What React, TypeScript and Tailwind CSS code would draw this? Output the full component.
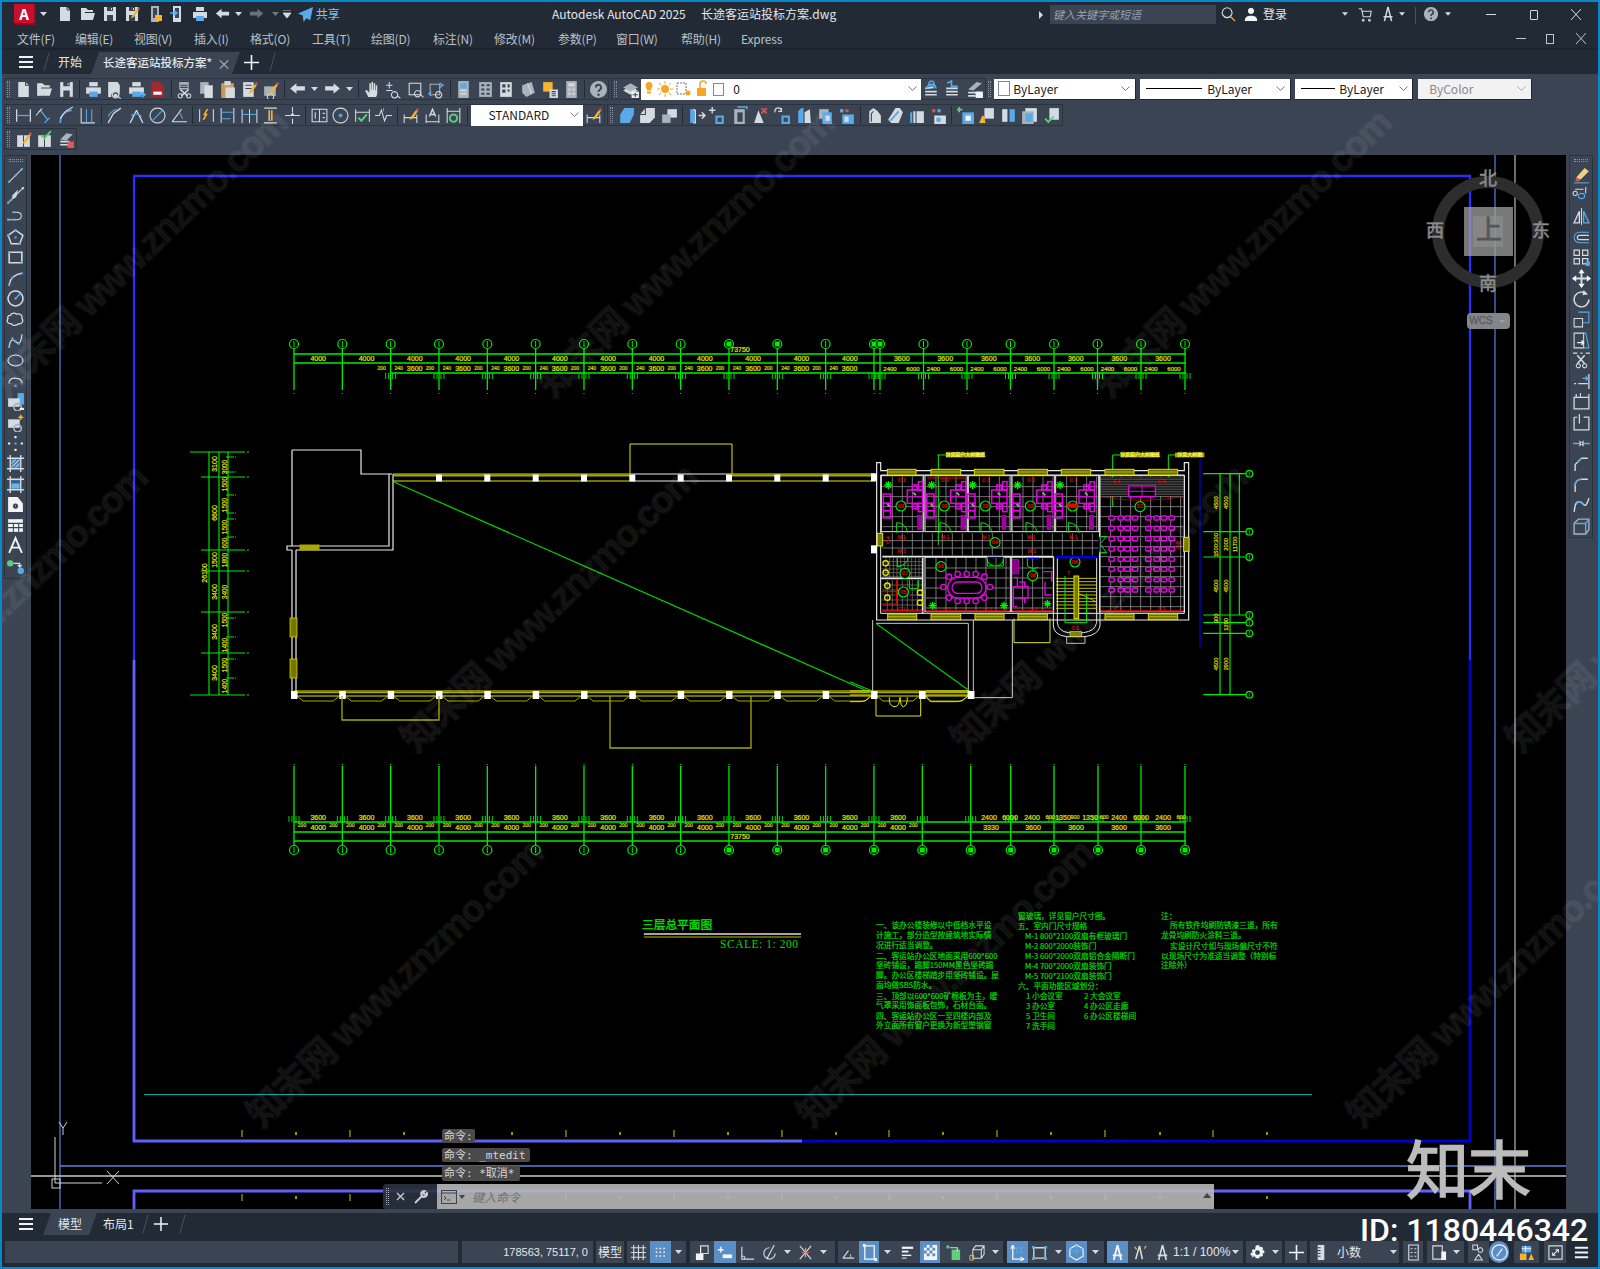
import React from 'react';

type Part = [string, string, number?];
const L = '#d6dbe1', D = '#3b4453', B = '#58abe8', Y = '#f4b42f', G = '#5fd07a', R = '#d9534f', W = '#f1f3f5', M = '#aab2bb';
const dt = (x: number, y: number) => `M${x - 1} ${y - 1}h2v2h-2z`;
const pencil: Part[] = [['M9 11l5-7 2 1-5 7-3 1z', Y, 0], ['M14 4l1-2 2 1-1 2z', R, 0]];
const floppy: Part[] = [['M3 2h12v14H3z', L, 0], ['M6 2h6v4H6zM6 10h6v6H6z', D, 0], ['M10 3h1v2h-1z', L, 0]];
const printer: Part[] = [['M5 2h8v4H5z', L, 0], ['M2 7h14v6H2z', L, 0], ['M5 11h8v5H5z', B, 0]];
const doc: Part[] = [['M4 2h7l3 3v11H4z', L, 0], ['M11 2v3h3', D]];
const mag: Part[] = [['M10 12a3 3 0 1 0 .01 0zM12 15l3 3', D, 2.2], ['M10 11a3 3 0 1 0 .01 0zM12 15l3 3', L]];
const ic: Record<string, Part[]> = {
  new: doc,
  open: [['M2 15V3h5l2 2h5v2H6l-2 8z', L, 0], ['M5 8h11l-2 7H3z', L, 0]],
  save: floppy,
  saveas: [...floppy, ...pencil],
  ph1: [['M5 1h8v16H5z', M, 0], ['M7 3h4v10H7z', D, 0], ['M9 10h7v6H9z', Y, 0]],
  ph2: [['M5 1h8v16H5z', L, 0], ['M7 3h4v10H7z', D, 0], ['M2 8h6M6 5.5L9 8l-3 2.5', B, 1.6]],
  print: printer,
  preview: [['M3 2h9l2 3v11H3z', L, 0], ...mag],
  plot: [...printer, ['M9 14h8M14 11.5l3 2.5-3 2.5', B, 1.6]],
  dwf: [['M3 2h8l4 4v10H3z', '#a5282e', 0], ['M5 11h8v3H5z', W, 0]],
  cut: [['M4 2h9v7H4z', M, 0], ['M5 5h7M5 7h7', D, 1], ['M5 9l7 6M13 9l-7 6', L, 1.4], ['M5 13a2 2 0 1 0 .01 0M13 13a2 2 0 1 0 .01 0', L]],
  copy: [['M3 2h8v11H3z', M, 0], ['M7 5h8v12H7z', L, 0]],
  paste: [['M3 3h12v14H3z', '#c99a58', 0], ['M6 1h6v4H6z', L, 0], ['M7 7h9v10H7z', L, 0]],
  match: [['M3 2h10v14H3z', L, 0], ['M5 5h6M5 8h6', D, 1], ...pencil],
  match2: [['M3 6h11v9H3z', M, 0], ['M9 13a3 3 0 1 0 .01 0', L], ...pencil],
  undo: [['M2 8l6-5v3h8v4H8v3z', L, 0]],
  redo: [['M16 8l-6-5v3H2v4h8v3z', L, 0]],
  hand: [['M5 16l-3-6 1.5-.6L6 12V3h1.5v6h.5V2h1.5v7h.5V3h1.5v7h.5V5h1.5v8l-1 3z', L, 0]],
  zoomrt: [['M5 2v6M2 5h6M2 10h6', L], ['M10 11a3 3 0 1 0 .01 0M12.5 14.5l3 3', L]],
  zoomw: [['M3 3h11v11H3z', L], ['M11 10a3 3 0 1 0 .01 0M13.5 13.5l3 3', L]],
  zoomp: [['M3 4h9v10H3z', M], ['M12 3l3 2-3 2M4 15l-2-2 2-2', B, 1.5], ['M11 11a3 3 0 1 0 .01 0', L]],
  prop: [['M4 1h10v16H4z', M, 0], ['M6 3h6v5H6z', B, 0], ['M6 10h6M6 13h6', L, 1.4]],
  dc: [['M3 2h12v14H3z', M, 0], ['M5 4h3v2H5zM10 4h3v2h-3zM5 8h3v2H5zM10 8h3v2h-3zM5 12h3v2H5zM10 12h3v2h-3z', D, 0]],
  tp: [['M3 2h11v14H3z', L, 0], ['M5 4h3v3H5zM10 4h2v3h-2zM5 9h3v3H5z', D, 0], ['M10 9h2v2h-2z', D, 0]],
  sheet: [['M3 5l9-3 3 10-8 4-4-4z', M, 0], ['M8 3l4 10', L]],
  note: [['M3 2h9v9H3z', Y, 0], ['M9 9h8v8H9z', L, 0], ['M11 11h4M11 13h4M11 15h4', D, 1]],
  calc: [['M4 1h10v16H4z', M, 0], ['M6 3h6v3H6z', L, 0], ['M6 8h2v2H6zM10 8h2v2h-2zM6 12h2v2H6zM10 12h2v2h-2z', L, 0]],
  help: [['M9 1a8 8 0 1 0 .01 0z', M, 0], ['M6.5 7a2.5 2.5 0 1 1 3.5 2.3c-1 .5-1 1-1 2', D, 1.8], ['M8 13h2v2H8z', D, 0]],
  layer: [['M2 10l7-4 7 4-7 4z', L, 0], ['M2 7l7-4 7 4-7 4z', M, 0], ['M10 11h7v6h-7z', W, 0], ['M11 14h5M13.5 12v4', D, 1]],
  l2: [['M3 14h11M3 11h11M3 8l8-1', L, 1.6], ['M9 1a2.5 2.5 0 1 0 .01 0', B, 1.4], ['M5 8a4 4 0 0 1 8 0', B, 2]],
  l3: [['M4 3l4-2v5h6', B, 1.6], ['M3 14l11 0M3 11l11 0M3 8h11', L, 1.6]],
  l4: [['M3 9l8-7 5 1-8 7z', M, 0], ['M3 12h12M3 15h7', L, 1.6], ['M10 11h7v6h-7z', W, 0]],
  dl: [['M2.5 3v12M15.5 3v12', L, 1.2], ['M2.5 9h13', B, 1.2]],
  da: [['M3 6l4-4M9 16l5-5M5 4l7 9', B, 1.2], ['M1 9l5-6', L]],
  dr: [['M3 16c0-7 4-11 11-12', B, 1.5], ['M3 12l5-7 7-4', L, 1]],
  dord: [['M3 2v14h13', L], ['M8 3v13M13 3v13', B]],
  darc: [['M3 16l5-9 7-5', L, 1.2], ['M3 10c2-4 4-6 8-7', B, 1]],
  drad: [['M3 16l6-12M9 4l6 12', L, 1.2], ['M4 9c3-2 7-2 10 1', B, 1]],
  ddia: [['M9 2a7 7 0 1 0 .01 0', L], ['M4 14L14 4', B]],
  dang: [['M2 15h14M2 15l9-12', L], ['M9 6l3 6', B]],
  qd: [['M2.5 3v12M15.5 3v12', L], ['M6 13l3-5-2 0 3-5', Y, 1.5]],
  db: [['M3 2v14M15 2v14', L], ['M3 6h12M3 12h9', B]],
  dc2: [['M2 3v13M9 3v13M16 3v13', L], ['M2 8h14', B]],
  ds: [['M3 2h12M3 16h12', L], ['M7 4h4v10H7z', Y, 0], ['M9 4v10', D]],
  dbk: [['M2 9h14', L], ['M9 1v5M9 12v5', L], ['M7 9l2-3 2 3z', L, 0]],
  tol: [['M2 3h14v12H2z', L], ['M9 3v12', L], ['M5 6v6M12 7h2M12 11h2', L]],
  cen: [['M9 2a7 7 0 1 0 .01 0', L], ['M7 9h4M9 7v4', B, 1.6]],
  ins: [['M2.5 3v12M15.5 3v12M2.5 6h13', L], ['M5 11l3 3 5-6', G, 1.8]],
  jog: [['M1 9h4l2-5 3 10 2-5h5', L], ['M9 2v3', B]],
  ded: [['M3 8v8M15 8v8M3 11h12', L], ...pencil],
  dt2: [['M3 8v8M15 8v8M3 15h12', L], ['M6 10L9 3l3 7M7 8h4', L, 1.3]],
  du: [['M3 2v14M15 2v14M3 5h12', L], ['M9 8a3.5 3.5 0 1 0 .01 0', G, 1.8]],
  solid1: [['M3 8l4-6h9v6l-4 8H3z', B, 0]],
  solid2: [['M7 2h9v9l-5 5H2V8z', L, 0], ['M2 8h5V2', D, 1]],
  solid3: [['M7 3h9v8H7z', L, 0], ['M2 8h8v8H2z', M, 0]],
  ext: [['M3 3h5v13H3z', B, 0], ['M6 3l2 1v12l-2 0', L, 1], ['M11 9h6M14 6l3 3-3 3', L, 1.4]],
  mv: [['M4 1v6M1 4h6', L, 1.3], ['M7 9h8v8H7z', B, 0], ['M9 11h4v4H9z', D, 0]],
  cp: [['M4 3h10v14H4z', M, 0], ['M7 1h9v2', B, 1.5], ['M7 6h5v9H7z', D, 0]],
  col: [['M3 16l4-12 5 12z', L, 0], ['M10 2l5 5M15 2l-5 5', R, 1.8]],
  turn: [['M2 6a3 3 0 0 1 6-2M8 2v3H5', L, 1.2], ['M8 9h8v8H8z', B, 0], ['M10 11h4v4h-4z', D, 0]],
  slice: [['M4 16V5l3-3h2v14z', B, 0], ['M10 16V6l5-3 1 13z', L, 0]],
  imp: [['M3 3h9v9H3z', M, 0], ['M6 6h9v11H6z', B, 0], ['M9 9h4v5H9z', L, 0]],
  red: [['M3 3h3v3H3zM8 3h3v3H8z', R, 0], ['M3 3h3v3H3z', B, 0], ['M5 8h11v9H5z', B, 0], ['M7 10h4v5H7z', L, 0]],
  chop: [['M5 16V5l4-3 4 3 3 4v7z', L, 0], ['M7 15V7l2-2', D, 1]],
  chamf: [['M2 13l7-11h4l3 4-4 10H5z', L, 0], ['M4 14l8-9', B, 1.8]],
  clean: [['M6 16V5h2v11zM9 16V5h7v11z', L, 0], ['M3 6h2v10H3z', B, 0]],
  sep: [['M3 3h3v3H3z', R, 0], ['M8 3h3v3H8z', B, 0], ['M5 9h11v8H5z', L, 0], ['M7 11h4v4H7z', B, 0]],
  sadd: [['M3 1v5M1 3.5h5', G, 1.6], ['M6 6h11v11H6z', B, 0], ['M9 9h5v5H9z', W, 0]],
  sbrush: [['M7 2h9v10H7z', L, 0], ['M2 16l3-7 2 1 1 6z', Y, 0]],
  sw: [['M3 3h5v12H3z', L, 0], ['M10 3h5v12h-5z', B, 0]],
  sbox: [['M5 2h11v13H5z', L, 0], ['M2 5h11v12H2z', M, 0], ['M5 7h7v8H5z', B, 0]],
  scheck: [['M7 2h9v11H7z', L, 0], ['M3 12l3 3 5-5', G, 1.8]],
  t1: [['M3 5h12v11H3z', L, 0], ['M9 5v11', D], ...pencil],
  t2: [['M3 5h12v11H3z', L, 0], ['M9 5v11', D], ['M6 5l3 3 6-7', G, 1.8]],
  t3: [['M3 9l6-6 6 1-6 6z', M, 0], ['M3 11h9M3 14h9', L, 1.6], ['M10 11h6v6h-6z', '#e05a5a', 0]],
  line: [['M3 15L15 3', L], [dt(3, 15) + dt(15, 3) + dt(9, 9), B, 0]],
  xline: [['M2 16L16 2', L], ['M6 10l4-4-1 4-3 2', L, 1.6], [dt(2, 16) + dt(5, 13), B, 0], [dt(16, 2), L, 0]],
  pl: [['M2 12h8c6 0 6-7 0-7H7', L], [dt(2, 12) + dt(8, 12) + dt(7, 5), B, 0]],
  poly: [['M9 2l7 5-3 8H5L2 7z', L, 1.4], [dt(9, 2) + dt(2, 7) + dt(13, 15) + dt(9, 9), B, 0]],
  rect: [['M3 4h12v10H3z', L, 1.5], [dt(3, 4) + dt(15, 14), B, 0]],
  arc: [['M3 15c1-6 5-10 12-11', L, 1.3], [dt(3, 15) + dt(15, 4) + dt(6, 8), B, 0]],
  circ: [['M9 2a7 7 0 1 0 .01 0', L, 1.4], ['M9 9l4-4', B, 1.3], [dt(9, 9) + dt(13, 5), B, 0]],
  cloud: [['M4 5c2-3 5-2 6-1 3-1 6 1 5 4 2 2 0 6-3 5-2 2-6 2-7 0-3 0-5-2-3-5-1-1 0-3 2-3z', L, 1.2]],
  spline: [['M3 15c1-7 3-8 6-5s5 2 6-6', L, 1.2], [dt(3, 15) + dt(15, 4) + dt(9, 10) + dt(6, 7) + dt(12, 12), B, 0]],
  ell: [['M2 9c0-3 3-5 7-5s7 2 7 5-3 5-7 5-7-2-7-5z', L, 1.2], [dt(9, 4) + dt(2, 9) + dt(16, 9) + dt(9, 14), B, 0]],
  ella: [['M3 10c0-3 3-5 7-4 3 0 5 2 5 4', L, 1.2], [dt(3, 10) + dt(15, 10) + dt(9, 13), B, 0]],
  blk: [['M11 1h6v11h-6z', B, 0], ['M2 6h11v8H2z', L, 0], ['M11 11a3.5 3.5 0 1 0 .01 0', M, 1.5], ['M13 15h4v2h-4z', W, 0]],
  mk: [['M2 6h11v8H2z', L, 0], ['M11 11a3.5 3.5 0 1 0 .01 0', M, 1.5], ['M14 1l1 2 2 1-2 1-1 2-1-2-2-1 2-1z', Y, 0]],
  pt: [[dt(9, 3) + dt(3, 9) + dt(15, 9) + dt(9, 15), W, 0], [dt(9, 9), B, 0]],
  hatch: [['M4 1v16M14 1v16M1 4h16M1 14h16', L, 1.3], ['M5 5h8v8H5z', '#4a90d0', 0], ['M5 9l4-4M5 13l8-8M9 13l4-4', W, .7]],
  grad: [['M4 1v16M14 1v16M1 4h16M1 14h16', L, 1.3], ['M5 5h8v8H5z', '#6fb5ea', 0], ['M5 5h8v3H5z', '#34608c', 0]],
  region: [['M2 2h9l5 6v8H2z', W, 0], ['M9 9a1.5 1.5 0 1 0 .01 0', D, 2]],
  tbl: [['M2 3h14v12H2z', W, 0], ['M2 7h14M2 11h14M7 7v8M12 7v8', D, 1]],
  atext: [['M3 16L9 2l6 14M5.5 11h7', W, 1.8]],
  addsel: [['M1 6a3 3 0 1 1 6 0 3 3 0 0 1-6 0z', G, 0], ['M11 13a3 3 0 1 1 6 0 3 3 0 0 1-6 0z', B, 0], ['M7 6h6v3M11 7.5l2 2 2-2', L, 1.2]],
  erase: [['M4 11l8-9 4 3-8 8z', '#f0d080', 0], ['M4 11l4 2-2 2-3-1z', R, 0], ['M2 16h14', B]],
  copyo: [['M3 5a2 2 0 1 0 .01 0M3 3h8', L], ['M9 7a3 2.5 0 1 0 .01 5M9 7a3 2.5 0 1 1 0 5', B], ['M13 1v6', L]],
  mirror: [['M2 15L7 4v11z', L, 1.3], ['M16 15L11 4v11z', B, 1.3], ['M9 1v16', L, 1]],
  offset: [['M16 4H7a5 5 0 0 0 0 10h9', B], ['M16 7H7a2 2 0 0 0 0 4h9', L]],
  array: [['M2 2h5v5H2zM10 2h5v5h-5zM2 10h5v5H2zM10 10h5v5h-5z', L, 1.1], ['M13 13h4v4h-4z', B, 0]],
  move: [['M9 1v16M1 9h16', L, 1.8], ['M9 0l3 4H6zM9 18l3-4H6zM0 9l4-3v6zM18 9l-4-3v6z', W, 0]],
  rotate: [['M14 5a7 7 0 1 0 2 5', L, 1.4], ['M11 1l4 4-5 1z', L, 0]],
  scale: [['M2 8h8v8H2z', L], ['M6 2h10v10h-6', B]],
  stretch: [['M2 2h9v14H2z', L], ['M11 2h2l3 14h-5', B], ['M5 11h6M9 9l2 2-2 2', W, 1.3]],
  trim: [['M1 2h4M8 2h2M13 2h4', L, 1.2], ['M5 4l7 8M12 4l-7 8', L, 1.4], ['M12 12a2 2 0 1 0 .01 0M6 12a2 2 0 1 0 .01 0', L]],
  extend: [['M2 11h2M6 11h9', L, 1.2], ['M16 2v14', L, 1.2], ['M10 6h5M13 4l2 2-2 2', B, 1.2]],
  brkpt: [['M2 5h2v-3M16 5V2M2 5h14v11H2z', L, 1.2], ['M8 1v4', L]],
  brk: [['M2 4v12h14V4h-5', L, 1.2], ['M7 1v9', L, 1.2], ['M2 4h3', L]],
  join: [['M1 9h6M11 9h6', B, 1.5], ['M7 6v6l3-3zM11 6v6l-3-3z', L, 0]],
  chamfer: [['M3 16v-6l6-6h6', L, 1.3], ['M5 8l4-4', B, 1.3]],
  fillet: [['M3 16V10c0-4 3-6 6-6h6', L, 1.3], ['M3 10c0-4 3-6 6-6', B, 1.3]],
  blend: [['M2 16l1-6c2-6 6-3 8-1s3 0 5-6', L, 1.3], ['M4 9c2-5 6-2 7 0', B, 1.3]],
  explode: [['M6 3h10v10l-3 4H2V7z', M, 1.3], ['M3 7h10v10M13 7l3-4', B, 1.4]],
  grid: [['M1 4h16M1 9h16M1 14h16M4 1v16M9 1v16M14 1v16', L, 1.2]],
  snap: [['M4 4h1.6v1.6H4zM8 4h1.6v1.6H8zM12 4h1.6v1.6H12zM4 8h1.6v1.6H4zM8 8h1.6v1.6H8zM12 8h1.6v1.6H12zM4 12h1.6v1.6H4zM8 12h1.6v1.6H8zM12 12h1.6v1.6H12z', W, 0]],
  infer: [['M2 10h8v7H2z', W, 0], ['M7 2h8v8H7z', L, 1.2], ['M7 10V4', W]],
  dyn: [['M1 6h6M4 3v6', W, 1.6], ['M6 11h10v4H6z', W, 0]],
  ortho: [['M3 3v13h13', L, 1.2], ['M6 16v-3h-3', L, 1]],
  polar: [['M9 4a6 6 0 1 0 6 6M14 1l-8 15', L, 1.2]],
  iso: [['M3 2l12 14M15 2L3 16', L, 1.2], ['M5 9h8', R, 1.4], ['M9 4v10', G, 1.4]],
  otr: [['M3 15l6-8M3 15h12', L, 1.2], ['M11 11a3 3 0 0 1-1 4', L]],
  osnap: [['M4 2h10v14H4z', W, 1.4], ['M2 0h3v3H2z', W, 0], ['M14 15h3v3h-3z', W, 0]],
  lw: [['M3 4h12', W, 2.4], ['M3 8h7', W, 2], ['M3 12h10', W, 1.5], ['M3 15h5', W, 1]],
  tr: [['M2 1h14v16H2z', W, 0], ['M2 1h3v3H2zM8 1h3v3H8zM5 4h3v3H5zM11 4h3v3h-3zM2 7h3v3H2zM8 7h3v3H8zM5 10h3v3H5zM11 10h3v3h-3z', '#5b8ec4', 0]],
  cyc: [['M3 1v4M1 3h4', G, 1.4], ['M7 6h9v11H7z', G, 0], ['M5 4h8v4', L, 1.2]],
  d3: [['M4 6l3-4h9v9l-3 4H4zM4 6h9v9M13 6l3-4', L, 1.1], ['M1 12h4v5H1z', Y, 1]],
  wst: [['M4 1v15h12', W, 1.4], ['M4 1l-2 4M4 1l2 4M16 16l-4-2M16 16l-4 2', W, 1.2], ['M8 4h5v5H8z', B, 1]],
  sel: [['M3 4h12v11H3z', L, 1.4], ['M1 2h3v3H1zM14 2h3v3h-3zM1 14h3v3H1zM14 14h3v3h-3z', B, 0]],
  gizmo: [['M9 1l7 4v8l-7 4-7-4V5z', W, 1.2], ['M9 9V1M9 9l7-4M9 9l-7-4', B, 1.1]],
  ann: [['M9 1L5 17M9 1l4 16M4 12h10', W, 2]],
  ann2: [['M9 2L5 16M9 2l3 14', L, 1.7], ['M4 3l2 3M14 5l2-3', Y, 1.3]],
  ann3: [['M9 1L5 17M9 1l4 16M4 12h10', L, 1.7]],
  gear: [['M9 1l2 .5.5 2 2-.6 1.5 1.6-.8 2 2 .5v2.5l-2 .5.8 2-1.5 1.6-2-.6-.5 2H7l-.5-2-2 .6L3 14.5l.8-2-2-.5V9.5l2-.5-.8-2L4.500 5.500l2 .6L7 2z', W, 0], ['M9 6.500a2.500 2.500 0 1 0 .01 0', D, 0]],
  plus: [['M9 1v16M1 9h16', W, 1.7]],
  ruler: [['M5 1h7v16H5z', L, 0], ['M5 4h3M5 7h3M5 10h3M5 13h3', D, 1.1]],
  qp: [['M4 1h10v16H4z', L, 1.2], ['M6 5h2M6 9h2M6 13h2M10 5h2M10 9h2M10 13h2', L, 1.1]],
  loc: [['M3 2h10v14H3z', L, 1.2], ['M8 10l3 3M12 8h5v9h-5z', W, 0]],
  nodes: [['M3 1h5v5H3zM11 4a2.500 2.500 0 1 0 .01 0M9 11l4 6H5z', L, 1.1]],
  perf: [['M9 1a8 8 0 1 0 .01 0', W, 1.3], ['M6 13l6-8', W, 1.3]],
  clean2: [['M4 2h10v7H4z', B, 0], ['M8 2v7M4 5h10', W, 1], ['M2 10h7v7H2z', Y, 0], ['M11 17l3-7 3 7z', Y, 0]],
  fs: [['M2 2h14v14H2z', L, 1.2], ['M6 12l6-6M9 6h3v3M6 9v3h3', W, 1.1]],
  ham: [['M2 4h14M2 9h14M2 14h14', W, 2]],
  share: [['M17 1L1 8l5 2 1 7 3-4 4 2z', B, 0]],
  cart: [['M2 3h3l2 9h8l1-6H6', L, 1.2], ['M7 15a1 1 0 1 0 .01 0M14 15a1 1 0 1 0 .01 0', L, 1.2]],
  user: [['M9 2a3.500 3.500 0 1 0 .01 0z', W, 0], ['M2 17c0-5 3-6 7-6s7 1 7 6z', W, 0]],
  search: [['M8 2a5.500 5.500 0 1 0 .01 0', L, 1.3], ['M12 12l5 5', Y, 1.5]],
};

function Ic({ n, s = 18 }: { n: string; s?: number }) {
  const parts = ic[n] || [];
  return (
    <svg width={s} height={s} viewBox="0 0 18 18" className="block shrink-0">
      {parts.map((p, i) =>
        p[2] === 0 ? <path key={i} d={p[0]} fill={p[1]} /> : <path key={i} d={p[0]} fill="none" stroke={p[1]} strokeWidth={p[2] ?? 1} />
      )}
    </svg>
  );
}
function Caret({ c = '#d6dbe1', w = 13 }: { c?: string; w?: number }) {
  return (
    <div className="flex shrink-0 items-center justify-center" style={{ width: w }}>
      <svg width="7" height="4" viewBox="0 0 7 4"><path d="M0 0h7L3.500 4z" fill={c} /></svg>
    </div>
  );
}
function Chev({ c = '#777' }: { c?: string }) {
  return <svg width="9" height="6" viewBox="0 0 9 6" className="shrink-0"><path d="M.5.5l4 4 4-4" fill="none" stroke={c} /></svg>;
}
function Grip() {
  return <div className="h-[16px] w-[3px] ml-[2px] mr-[2.25px] border-x border-dotted border-[#8a93a0] shrink-0" />;
}
function Tool({ items }: { items: string[] }) {
  return (
    <>
      {items.map((it, i) =>
        it === '|' ? (
          <div key={i} className="flex w-[5.5px] h-full shrink-0 justify-center items-center"><div className="w-px h-[18px] bg-[#222a35]" /></div>
        ) : it === '^' ? (
          <Caret key={i} />
        ) : (
          <div key={i} className="flex w-[21.5px] shrink-0 justify-center"><Ic n={it} s={19} /></div>
        )
      )}
    </>
  );
}
function Panel({ children, cls }: { children: React.ReactNode; cls: string }) {
  return <div className={`flex h-[22px] items-center border border-[#2a323e] shrink-0 ${cls}`}>{children}</div>;
}

function Select({ w, bg = 'bg-white', children }: { w: string; bg?: string; children: React.ReactNode }) {
  return <div className={`flex h-[21px] items-center shrink-0 border-b border-r border-[#1f2630] ${bg} ${w}`}>{children}</div>;
}

/* ------------- drawing ------------- */
const GR = '#00dc00', GB = '#00ee00', YE = '#e4e400', WH = '#e9e9e9', MA = '#e800e8', RE = '#f00000', YD = '#a8a800';
const topX = [...Array.from({ length: 13 }, (_, i) => 294 + 48.33 * i), 880, 923.5, 967, 1010.5, 1054, 1097.5, 1141, 1185];
const botX = [...Array.from({ length: 14 }, (_, i) => 294 + 48.33 * i), 970.7, 1010.7, 1054, 1098, 1141, 1185];
const botUp: [number, string][] = [[989, '2400'], [1010, '6000'], [1032, '2400'], [1050, '600'], [1063, '1350'], [1075, '900'], [1090, '1350'], [1104, '600'], [1119, '2400'], [1141, '6000'], [1163, '2400'], [1181, '600']];
const botLo: [number, string][] = [[991, '3330'], [1033, '3600'], [1076, '3600'], [1119, '3600'], [1163, '3600']];

function Tx({ x, y, s, c = YE, fs = 7, rot, a = 'middle', ff }: { x: number; y: number; s: string; c?: string; fs?: number; rot?: number; a?: 'middle' | 'start' | 'end'; ff?: string }) {
  return (
    <text x={x} y={y} fill={c} stroke={c} strokeWidth={fs * 0.03} fontSize={fs} textAnchor={a} dominantBaseline="middle" fontFamily={ff} transform={rot ? `rotate(${rot} ${x} ${y})` : undefined}>
      {s}
    </text>
  );
}
function Ticks({ x, y }: { x: number; y: number }) {
  return <path d={`M${x - 5} ${y}v6M${x - 2} ${y}v6M${x + 2} ${y}v6M${x + 5} ${y}v6`} stroke={GR} strokeWidth="1" fill="none" />;
}
function Bubble({ x, y, fill }: { x: number; y: number; fill?: boolean }) {
  return (
    <g>
      <circle cx={x} cy={y} r="4.500" fill="#000" stroke={GB} strokeWidth="1.200" />
      {fill ? <rect x={x - 2.5} y={y - 2.5} width="5" height="5" fill={GB} /> : <path d={`M${x} ${y - 3}v6`} stroke={GB} strokeWidth="1" />}
    </g>
  );
}
function TopDims() {
  const filled = [9, 10, 12, 13];
  return (
    <g>
      <path d="M294 354H1186M294 363H1186M390 373H1186" stroke={GB} strokeWidth="1.300" />
      {topX.map((x, i) => (
        <g key={i}>
          <path d={`M${x} 349V390`} stroke={GB} strokeWidth="1.300" />
          <rect x={x - .5} y="393" width="1" height="1" fill={GB} />
          <Bubble x={x} y={344} fill={filled.includes(i)} />
          {i >= 2 && <Ticks x={x} y={373} />}
          {i < topX.length - 1 && i !== 12 && <Tx x={(x + topX[i + 1]) / 2} y={359} s={i >= 13 ? '3600' : '4000'} />}
          {i >= 2 && i < 12 && (
            <g>
              <Tx x={x - 9} y={369} s="200" fs={5} />
              <Tx x={x + 8} y={369} s="240" fs={5} />
              <Tx x={x + 24} y={369} s="3600" fs={7} />
            </g>
          )}
          {i >= 13 && i < topX.length - 1 && (
            <g>
              <Tx x={x + 10} y={369} s="2400" fs={6} />
              <Tx x={x + 33} y={369} s="6000" fs={6} />
            </g>
          )}
        </g>
      ))}
      <Tx x={740} y={350} s="73750" fs={7} />
    </g>
  );
}
function BotDims() {
  return (
    <g>
      <path d="M294 822H1186M294 832H1186M294 841H1186" stroke={GB} strokeWidth="1.300" />
      {botX.map((x, i) => (
        <g key={i}>
          <path d={`M${x} 766V845`} stroke={GB} strokeWidth="1.300" />
          <rect x={x - .5} y="764" width="1" height="1" fill={GB} />
          <Bubble x={x} y={850} fill={i >= 9} />
          <Ticks x={x} y={816} />
          {i < 13 && (
            <g>
              <Tx x={(x + botX[i + 1]) / 2} y={818} s="3600" />
              <Tx x={(x + botX[i + 1]) / 2} y={828} s="4000" />
              <Tx x={x + 8} y={826} s="200" fs={5} />
              <Tx x={botX[i + 1] - 9} y={826} s="200" fs={5} />
            </g>
          )}
        </g>
      ))}
      {botUp.map((t, i) => <Tx key={i} x={t[0]} y={818} s={t[1]} fs={t[1].length === 3 ? 5.500 : 7} />)}
      {botLo.map((t, i) => <Tx key={i} x={t[0]} y={828} s={t[1]} />)}
      <Tx x={740} y={837} s="73750" fs={7} />
    </g>
  );
}
function LeftDims() {
  const ys = [452, 477, 550, 571, 612, 653, 695];
  const lab1: [number, number, string][] = [[215, 464, '3100'], [215, 513, '6600'], [215, 560, '1500'], [215, 592, '3400'], [215, 632, '3400'], [215, 673, '3400']];
  const lab2: [number, number, string][] = [[225, 467, '3000'], [225, 484, '1500'], [225, 505, '1500'], [225, 527, '1500'], [225, 543, '600'], [225, 560, '1800'], [225, 592, '3400'], [225, 620, '1500'], [225, 645, '1400'], [225, 665, '1500'], [225, 686, '1400']];
  return (
    <g>
      <path d="M209 452V695M219 452V695M228 452V695" stroke={GR} strokeWidth="1.200" fill="none" />
      {ys.map((y, i) => <path key={i} d={`M${i === 0 || i === 6 ? 190 : 201} ${y}H245M247 ${y}h2`} stroke={GB} strokeWidth="1.200" />)}
      {[457, 472, 495, 513, 519, 537, 618, 637, 659, 678].map(y => <path key={y} d={`M226 ${y}h8M235 ${y}h1`} stroke={GB} strokeWidth="1" />)}
      {lab1.map((l, i) => <Tx key={i} x={l[0]} y={l[1]} s={l[2]} rot={-90} />)}
      {lab2.map((l, i) => <Tx key={i} x={l[0]} y={l[1]} s={l[2]} rot={-90} fs={6.500} />)}
      <Tx x={205} y={573} s="26100" rot={-90} />
    </g>
  );
}
function Plan() {
  const cols = [439, 487.3, 535.7, 584, 632.3, 680.7, 729, 777.3, 825.7];
  const south = [294, 342.3, 390.7, 439, 487.3, 535.7, 584, 632.3, 680.7, 729, 777.3, 825.7, 874, 922, 971];
  return (
    <g fill="none">
      <path d="M292 450H361V474H392M389 474V546H287V550H292M296 550H393V474" stroke={WH} strokeWidth="1.200" />
      <path d="M292 450V546M292 550V691M296 550V691" stroke={WH} strokeWidth="1.200" />
      <rect x="300" y="545" width="19" height="5" fill={YD} stroke={YD} />
      <rect x="290" y="618" width="7" height="19" fill="#777700" stroke={YE} strokeWidth=".7" />
      <rect x="290" y="659" width="7" height="19" fill="#777700" stroke={YE} strokeWidth=".7" />
      <path d="M393 474H632M393 481H632M729 474H875M729 481H875" stroke={YE} strokeWidth="1" />
      <path d="M393 475.500H632M729 475.500H875" stroke={YD} strokeWidth="2" />
      <path d="M632 474H729M632 481H729" stroke={WH} strokeWidth="1" />
      <path d="M630 474V444H732V474" stroke={YE} strokeWidth="1" />
      {cols.map(x => <rect key={x} x={x - 3} y="474.500" width="6" height="7" fill="#fff" />)}
      <path d="M294 691H970M294 696H970" stroke={YE} strokeWidth="1" />
      <path d="M294 692.500H970" stroke={YD} strokeWidth="1.500" />
      {south.slice(0, 14).map((x, i) => <path key={x} d={`M${x + 3} 696l6 5H${south[i + 1] - 9}l6-5`} stroke={YD} strokeWidth="1" />)}
      {south.map(x => <rect key={x} x={x - 3} y="691" width="6.500" height="8" fill="#fff" />)}
      <path d="M342 696V720H439V696M610 696V748H751V696" stroke={YD} strokeWidth="1.300" />
      <path d="M394 482L874 694" stroke="#00cc00" strokeWidth="1.300" />
    </g>
  );
}
function gridD(x0: number, y0: number, x1: number, y1: number, sx: number, sy: number) {
  let d = '';
  for (let x = x0 + sx; x < x1; x += sx) d += `M${x} ${y0}V${y1}`;
  for (let y = y0 + sy; y < y1; y += sy) d += `M${x0} ${y}H${x1}`;
  return d;
}
function Bb({ x, y, s }: { x: number; y: number; s: string }) {
  return (
    <g>
      <circle cx={x} cy={y} r="15" fill="#000" stroke={GB} strokeWidth="3.500" />
      <Tx x={x} y={y + 1} s={s} c={RE} fs={17} />
    </g>
  );
}
function Plant({ x, y }: { x: number; y: number }) {
  return <path d={`M${x - 12} ${y}H${x + 12}M${x} ${y - 12}V${y + 12}M${x - 8} ${y - 8}L${x + 8} ${y + 8}M${x + 8} ${y - 8}L${x - 8} ${y + 8}`} stroke={GB} strokeWidth="4" />;
}
function Door({ x, y, f }: { x: number; y: number; f?: boolean }) {
  return <path d={f ? `M${x} ${y}V${y + 30}A33 33 0 0 0 ${x + 33} ${y}` : `M${x} ${y}V${y - 30}A33 33 0 0 1 ${x + 33} ${y}`} stroke={GB} strokeWidth="3" fill="none" />;
}
function Office({ ox, n }: { ox: number; n: string }) {
  const r: [number, number, number, number][] = [[100, 162, 22, 28], [100, 190, 22, 22], [100, 212, 22, 22], [172, 150, 46, 40], [205, 125, 13, 25], [205, 190, 13, 25], [187, 135, 14, 14], [187, 192, 14, 14]];
  return (
    <g transform={`translate(${ox} 0)`}>
      {r.map((a, i) => <rect key={i} x={a[0]} y={a[1]} width={a[2]} height={a[3]} stroke={MA} strokeWidth="4.500" fill="none" />)}
      <path d="M172 170H218" stroke={MA} strokeWidth="3" />
      <path d="M190 158l8 8M112 192l8 8" stroke="#999" strokeWidth="6" />
      <rect x="203" y="226" width="12" height="42" fill="#a000a0" stroke="#c000c0" strokeWidth="2" />
      <Plant x={115} y={135} />
      <Tx x={155} y={123} s="C-1" c={RE} fs={15} />
      <Bb x={153} y={198} s={n} />
      <Door x={140} y={278} />
      <Tx x={155} y={292} s="M-1" c={RE} fs={14} />
    </g>
  );
}
function Detail() {
  const winT = [[112, 198], [243, 332], [373, 462], [504, 592], [634, 722], [765, 852], [895, 983]];
  const winB = [[113, 200], [243, 332], [375, 462], [504, 592], [765, 852], [895, 983]];
  const seatX = [785, 812, 832, 855, 895, 920, 942, 965];
  const seatY = [234, 265, 296, 327, 358, 388, 419, 450];
  const rooms: [number, number, number, number][] = [[97, 110, 218, 272], [228, 110, 349, 272], [358, 110, 480, 272], [489, 110, 611, 272], [620, 110, 743, 272], [752, 110, 1000, 512], [228, 354, 478, 512], [488, 354, 608, 512]];
  const chairs = [[297, 410], [323, 402], [350, 402], [377, 402], [403, 410], [280, 441], [420, 441], [297, 473], [323, 483], [350, 483], [377, 483], [403, 473]];
  const steps = Array.from({ length: 10 }, (_, i) => 415 + i * 10);
  return (
    <g transform="translate(850 440) scale(.33333)" fill="none">
      <path d="M262 45H288M265 45V315" stroke={GB} strokeWidth="3" />
      <path d="M812 45H788V200M975 45H955V150" stroke={GB} strokeWidth="3" />
      <rect x="288" y="38" width="116" height="14" fill={YD} />
      <rect x="812" y="38" width="116" height="14" fill={YD} />
      <rect x="975" y="38" width="88" height="14" fill={YD} />
      <Tx x={346} y={45} s="详见窗户大样图纸" c="#ffff60" fs={15} />
      <Tx x={870} y={45} s="详见窗户大样图纸" c="#ffff60" fs={15} />
      <Tx x={1019} y={45} s="详见大样图" c="#ffff60" fs={15} />
      {/* ceiling grids */}
      {rooms.map((r, i) => <path key={i} d={gridD(r[0], r[1], r[2], r[3], 30, 30)} stroke="#8a8a8a" strokeWidth="2.500" />)}
      <path d={gridD(97, 280, 745, 346, 30, 22)} stroke="#8a8a8a" strokeWidth="2.500" />
      <path d={gridD(97, 354, 218, 415, 11, 11)} stroke="#808080" strokeWidth="2" />
      <path d={gridD(97, 420, 218, 512, 15, 15)} stroke="#808080" strokeWidth="2" />
      {/* hatch */}
      <rect x="752" y="112" width="248" height="56" fill="#000" />
      <path d={Array.from({ length: 11 }, (_, i) => `M752 ${114 + i * 5}H1000`).join('')} stroke="#777" strokeWidth="2" />
      <path d="M752 170Q870 192 1000 170" stroke={RE} strokeWidth="2" />
      {/* walls */}
      <path d="M80 68V540H1016V68H1003V92H92V68Z" stroke={WH} strokeWidth="3.500" />
      <path d="M92 105H1003V520H92Z" stroke={WH} strokeWidth="3" />
      {rooms.map((r, i) => <rect key={i} x={r[0] - 3} y={r[1] - 3} width={r[2] - r[0] + 6} height={r[3] - r[1] + 6} stroke={WH} strokeWidth="3" />)}
      <path d="M97 350H610M92 415H218M218 354V520" stroke={WH} strokeWidth="5" />
      <path d="M610 354V558Q612 585 650 590H705Q745 585 750 558V110M622 354V548Q625 574 655 578H700Q735 574 740 548V354" stroke={WH} strokeWidth="3" />
      <path d="M650 590V610H705V590" stroke="#bbb" strokeWidth="3" />
      {/* windows */}
      {winT.map((w, i) => <g key={i}><rect x={w[0]} y="88" width={w[1] - w[0]} height="17" fill="#666600" stroke={YE} strokeWidth="3" /><path d={`M${w[0]} 96H${w[1]}`} stroke={YD} strokeWidth="4" /></g>)}
      {winB.map((w, i) => <g key={i}><rect x={w[0]} y="522" width={w[1] - w[0]} height="17" fill="#666600" stroke={YE} strokeWidth="3" /><path d={`M${w[0]} 530H${w[1]}`} stroke={YD} strokeWidth="4" /></g>)}
      <rect x="82" y="280" width="16" height="38" fill="#777700" stroke={YE} strokeWidth="3" />
      <rect x="1001" y="292" width="16" height="42" fill="#777700" stroke={YE} strokeWidth="3" />
      <rect x="660" y="575" width="35" height="14" fill="#777700" stroke={YE} strokeWidth="2" />
      {/* red */}
      <path d="M97 513H218M228 513H478M488 513H610M752 513H1000" stroke={RE} strokeWidth="4" />
      <path d="M232 114H345M97 455H140V492H97M140 420V455" stroke={RE} strokeWidth="3" />
      {[[155, 508], [290, 508], [415, 508], [550, 508], [805, 508], [935, 508], [800, 124], [935, 124], [675, 566]].map((p, i) => <Tx key={i} x={p[0]} y={p[1]} s="C-1" c={RE} fs={14} />)}
      <Tx x={115} y={300} s="C-4" c={RE} fs={14} rot={-90} />
      <Tx x={985} y={315} s="C-5" c={RE} fs={14} rot={-90} />
      <Tx x={155} y={335} s="M-3" c={RE} fs={14} />
      <Tx x={545} y={335} s="M-3" c={RE} fs={14} />
      <Tx x={656} y={400} s="T" c={RE} fs={14} />
      {/* offices */}
      <Office ox={0} n="03" />
      <Office ox={130} n="03" />
      <Office ox={253} n="03" />
      <Office ox={388} n="03" />
      <Office ox={515} n="03" />
      <rect x="652" y="190" width="32" height="12" fill={RE} />
      {/* hall */}
      {seatY.map(y => seatX.map(x => <rect key={`${x}-${y}`} x={x - 8} y={y - 6} width="16" height="12" rx="3" stroke={MA} strokeWidth="4.500" fill="#000" />))}
      <rect x="836" y="138" width="80" height="32" stroke={MA} strokeWidth="4" fill="#000" />
      <path d="M876 138V170M836 154H916" stroke={MA} strokeWidth="3" />
      <Bb x={870} y={200} s="02" />
      {/* meeting */}
      <rect x="293" y="412" width="115" height="62" rx="31" stroke={MA} strokeWidth="4" fill="#000" />
      <rect x="306" y="426" width="90" height="34" rx="17" stroke={MA} strokeWidth="4" />
      {chairs.map((c, i) => <circle key={i} cx={c[0]} cy={c[1]} r="8" stroke={MA} strokeWidth="4" fill="#000" />)}
      <Plant x={248} y={497} />
      <Plant x={462} y={497} />
      <Plant x={592} y={491} />
      <Bb x={273} y={380} s="01" />
      {/* right small office */}
      <rect x="488" y="358" width="18" height="44" fill="#800080" stroke="#c000c0" strokeWidth="2" />
      <rect x="490" y="440" width="44" height="34" stroke={MA} strokeWidth="4" />
      <path d="M490 412h12v28M490 474v26h12M508 426h16v14M508 474h16v16M580 395h25v30M585 425v40h20" stroke={MA} strokeWidth="4" />
      <Bb x={548} y={407} s="08" />
      <Bb x={675} y={366} s="06" />
      <Bb x={435} y={308} s="04" />
      {/* wc */}
      {[[107, 370], [107, 398], [112, 437], [112, 473], [210, 458], [210, 488]].map((c, i) => <circle key={i} cx={c[0]} cy={c[1]} r="8" stroke={YE} strokeWidth="4" />)}
      <Bb x={165} y={400} s="07" />
      <Bb x={160} y={456} s="05" />
      {/* doors and blue */}
      <Door x={142} y={350} f />
      <path d="M178 420V445H205V420" stroke={GB} strokeWidth="3" />
      <path d="M412 352V378H460V352M430 376a18 18 0 0 1-18-18M442 376a18 18 0 0 0 18-18" stroke={GB} strokeWidth="3" />
      <path d="M532 352V378A33 33 0 0 0 565 382" stroke={GB} strokeWidth="3" />
      <path d="M748 290H770L750 312L770 338H748" stroke={GB} strokeWidth="3" />
      <path d="M412 352H460M532 355H565M618 350H740M618 354H740M749 292V335M1050 55V620" stroke="#0000e0" strokeWidth="3.500" />
      {/* stairs */}
      {steps.map(y => <path key={y} d={`M618 ${y}H672M686 ${y}H740`} stroke={YE} strokeWidth="2.500" />)}
      <rect x="672" y="408" width="14" height="128" fill="#777700" stroke={YE} strokeWidth="3" />
      <path d="M645 408V548H710V460" stroke={GB} strokeWidth="3" />
      <path d="M686 460L738 485" stroke={YE} strokeWidth="2" />
      {/* lower wing */}
      <path d="M68 540V770M78 550H355V770M370 540V770M375 773H487V540" stroke="#ccc" strokeWidth="3" />
      <path d="M80 552L355 750M0 725L65 752" stroke="#00cc00" strokeWidth="3.500" />
      <path d="M492 535V608H600V535M78 770V828H212V770M118 772V785Q122 800 135 800Q148 800 150 772M150 772Q152 800 160 800Q172 798 172 772" stroke={YE} strokeWidth="3" />
      <path d="M228 753H355M228 765H355Q340 785 320 785H245Q235 785 228 765M0 753H65M0 765H65Q50 785 30 785H0" stroke={YE} strokeWidth="3" />
      {[[72, 112], [72, 328], [72, 765], [217, 765], [362, 765]].map((c, i) => <rect key={i} x={c[0] - 9} y={c[1] - 12} width="18" height="24" fill="#fff" />)}
      {/* right dims */}
      {[101, 275, 351, 525, 548, 580, 764].map(v => <g key={v}><path d={`M1060 ${v}H1188`} stroke={GB} strokeWidth="3.500" /><circle cx="1198" cy={v} r="10" stroke={GB} strokeWidth="3.500" fill="#000" /><path d={`M1198 ${v - 7}v14`} stroke={GB} strokeWidth="2" /></g>)}
      <path d="M1110 101V764M1140 101V764M1168 101V525" stroke={GB} strokeWidth="3.500" />
      {[[1100, 188, '4500'], [1130, 188, '4500'], [1100, 315, '1500:300'], [1130, 313, '2000'], [1158, 313, '11700'], [1100, 438, '4500'], [1130, 438, '4500'], [1100, 535, '300'], [1130, 553, '1200'], [1100, 672, '4500'], [1130, 672, '2900']].map((t, i) => <Tx key={i} x={t[0] as number} y={t[1] as number} s={t[2] as string} fs={17} rot={-90} />)}
    </g>
  );
}
function Notes() {
  const n1 = ['一、该办公楼装修以中低档水平设', '计施工，部分造型按建筑地实际情', '况进行适当调整。', '二、客运站办公区地面采用600*600', '坚砖铺设，踢脚150MM黑色坚砖踢', '脚。办公区楼梯踏步用坚砖铺设。屋', '面均做SBS防水。', '三、顶部以600*600矿棉板为主，暖', '气罩采用饰面板包饰，石材台面。', '四、客运站办公区一至四楼内部及', '外立面所有窗户更换为新型塑钢窗'];
  const y1 = [926, 936, 946, 957, 966, 976, 986, 997, 1006, 1017, 1026];
  const n2: [number, number, string][] = [[1018, 917, '窗玻璃，详见窗户尺寸图。'], [1018, 927, '五、室内门尺寸规格'], [1025, 937, 'M-1 800*2100双扇有框玻璃门'], [1025, 947, 'M-2 800*2000装饰门'], [1025, 957, 'M-3 600*2000双扇铝合金隔断门'], [1025, 967, 'M-4 700*2000双扇装饰门'], [1025, 977, 'M-5 700*2100双扇装饰门'], [1018, 987, '六、平面功能区域划分：'], [1026, 997, '1 小会议室'], [1084, 997, '2 大会议室'], [1026, 1007, '3 办公室'], [1084, 1007, '4 办公区走廊'], [1026, 1017, '5 卫生间'], [1084, 1017, '6 办公区楼梯间'], [1026, 1027, '7 洗手间'], [1161, 917, '注：'], [1170, 926, '所有铁件均刷防锈漆三道，所有'], [1161, 936, '龙骨均刷防火涂料三道。'], [1170, 947, '实设计尺寸如与现场偏尺寸不符'], [1161, 957, '以现场尺寸为准适当调整（特别标'], [1161, 966, '注除外）']];
  const c = '#00d400';
  return (
    <g fontFamily="'Noto Sans CJK SC', sans-serif">
      <Tx x={642} y={926} s="三层总平面图" c="#00e000" fs={11.700} a="start" />
      <path d="M644 934H801" stroke="#ddd" strokeWidth="1.500" />
      <path d="M644 937H801" stroke="#b8b800" strokeWidth="1" />
      <text x={720} y={945} fill="#00d800" fontSize="11.500" dominantBaseline="middle" fontFamily="'Liberation Serif', serif" textLength={78}>SCALE: 1: 200</text>
      {n1.map((s, i) => <Tx key={i} x={876} y={y1[i]} s={s} c={c} fs={7.700} a="start" />)}
      {n2.map((t, i) => <Tx key={i} x={t[0]} y={t[1]} s={t[2]} c={c} fs={7.700} a="start" />)}
    </g>
  );
}
function Compass() {
  const cc = '#8c8c8c';
  return (
    <g fontFamily="'Noto Sans CJK SC', sans-serif">
      <circle cx="1488" cy="232" r="50" fill="none" stroke="#2d2d2d" strokeWidth="12" />
      <rect x="1464" y="207" width="49" height="49" fill="#a6a6a6" fillOpacity=".72" />
      <rect x="1473" y="216" width="30" height="31" fill="#8f8f8f" fillOpacity=".6" />
      <Tx x={1489} y={232} s="上" c="#555" fs={26} />
      <Tx x={1488} y={180} s="北" c={cc} fs={18} />
      <Tx x={1488} y={285} s="南" c={cc} fs={18} />
      <Tx x={1435} y={232} s="西" c={cc} fs={18} />
      <Tx x={1541} y={232} s="东" c={cc} fs={18} />
      <rect x="1467" y="313" width="43" height="16" rx="4" fill="#85858c" />
      <Tx x={1481} y={321} s="WCS" c="#5a5a60" fs={10} ff="'Liberation Sans', sans-serif" />
      <path d="M1499 320h6l-3 3z" fill="#a0a0a6" />
    </g>
  );
}
function Drawing() {
  const long = [242, 350, 458, 566, 674, 782, 889, 997, 1105, 1213];
  const small = [296, 404, 512, 620, 728, 836, 943, 1051, 1160, 1267];
  return (
    <svg viewBox="31 155 1535 1054" width="1535" height="1054" className="block" fontFamily="'Liberation Sans', 'Noto Sans CJK SC', sans-serif">
      <rect x="31" y="155" width="1535" height="1054" fill="#000" />
      <path d="M60 155V1209M1495 155V1209" stroke="#5c7fe0" strokeWidth="1.200" />
      <path d="M1515 155V1209" stroke="#b8b8b8" strokeWidth="1.200" />
      <path d="M134 660V176H1470V660" stroke="#2c2cff" strokeWidth="2.300" fill="none" />
      <path d="M134 660V1141H802" stroke="#6060ff" strokeWidth="2.800" fill="none" />
      <path d="M802 1141H1470V660" stroke="#0000c8" strokeWidth="2.800" fill="none" />
      <path d="M60 1166H1566" stroke="#5c7fe0" strokeWidth="1.300" />
      <path d="M31 1176H1566" stroke="#c8c8c8" strokeWidth="1.300" />
      <path d="M134 1209V1191H1470V1209" stroke="#6060ff" strokeWidth="2.800" fill="none" />
      <path d="M144 1094.500H1312" stroke="#00a8a8" strokeWidth="1" />
      {long.map(x => <path key={x} d={`M${x} 1130v7M${x} 1194v7`} stroke="#c8c800" strokeWidth="1" />)}
      {small.map(x => <path key={x} d={`M${x} 1132v3M${x} 1196v3`} stroke="#c8c800" strokeWidth="1.500" />)}
      <path d="M55 1137V1183H102" stroke="#d0d0d0" strokeWidth="1" fill="none" />
      <rect x="52" y="1179" width="8" height="9" fill="none" stroke="#d0d0d0" />
      <path d="M59 1122l4 6 4-6M63 1128v7" stroke="#d0d0d0" strokeWidth="1" fill="none" />
      <path d="M107 1171l12 13M119 1171l-12 13" stroke="#d0d0d0" strokeWidth="1" fill="none" />
      <TopDims />
      <LeftDims />
      <Plan />
      <Detail />
      <BotDims />
      <Notes />
      <Compass />
    </svg>
  );
}
function Watermarks() {
  const rows: [number, number][] = [
    [6, 399], [553, 399], [1110, 399],
    [-134, 754], [416, 754], [966, 754], [1521, 754],
    [262, 1129], [812, 1129], [1362, 1129],
  ];
  return (
    <svg className="absolute left-0 top-0 pointer-events-none" width="1600" height="1269" viewBox="0 0 1600 1269">
      {rows.map((r, i) => (
        <text key={i} x={r[0]} y={r[1]} transform={`rotate(-44 ${r[0]} ${r[1]})`} fontSize="37" fontWeight="700" fill="#ffffff" fillOpacity=".06" stroke="#ffffff" strokeOpacity=".05" strokeWidth="3" textLength={395} fontFamily="'Liberation Sans', 'Noto Sans CJK SC', sans-serif">
          知末网 www.znzmo.com
        </text>
      ))}
    </svg>
  );
}

/* ------------- chrome ------------- */
const menus: [string, number][] = [['文件(F)', 58], ['编辑(E)', 59], ['视图(V)', 60], ['插入(I)', 56], ['格式(O)', 62], ['工具(T)', 59], ['绘图(D)', 62], ['标注(N)', 61], ['修改(M)', 64], ['参数(P)', 58], ['窗口(W)', 65], ['帮助(H)', 60], ['Express', 60]];
const leftTools = ['line', 'xline', 'pl', 'poly', 'rect', 'arc', 'circ', 'cloud', 'spline', 'ell', 'ella', 'blk', 'mk', 'pt', 'hatch', 'grad', 'region', 'tbl', 'atext', 'addsel'];
const rightTools = ['erase', 'copyo', 'mirror', 'offset', 'array', 'move', 'rotate', 'scale', 'stretch', 'trim', 'extend', 'brkpt', 'brk', 'join', 'chamfer', 'fillet', 'blend', 'explode'];

function Sb({ w, n, on, round }: { w: number; n: string; on?: boolean; round?: boolean }) {
  return (
    <div className={`flex h-full shrink-0 items-center justify-center ${on ? 'bg-[#5b8ec4]' : ''} ${round ? 'rounded-full' : ''}`} style={{ width: w }}>
      <Ic n={n} s={17} />
    </div>
  );
}
function Sbox({ w, ml = 3, children }: { w: number; ml?: number; children: React.ReactNode }) {
  return <div className="flex h-full shrink-0 items-center bg-[#3b4453]" style={{ width: w, marginLeft: ml }}>{children}</div>;
}
function TitleBar() {
  const tools = ['new', 'open', 'save', 'saveas', 'ph1', 'ph2', 'print'];
  return (
    <div className="flex h-[28px] items-center bg-[#222a35] text-[#e4e7ea] text-[12px] shrink-0">
      <div className="ml-[14px] flex h-[21px] w-[22px] items-center justify-center bg-[#c8102e] text-white font-bold text-[15px] shrink-0 border-b-2 border-r-2 border-[#8a0c20]">A</div>
      <div className="ml-[3px] w-[8px]"><Caret w={8} /></div>
      <div className="ml-[7px] flex items-center">
        {tools.map(t => <div key={t} className="flex w-[22.4px] justify-center"><Ic n={t} s={18} /></div>)}
        <div className="flex w-[24px] justify-center"><Ic n="undo" s={17} /></div>
        <Caret w={7} />
        <div className="flex w-[30px] justify-center opacity-40"><Ic n="redo" s={17} /></div>
        <Caret w={7} c="#777" />
        <svg width="8" height="8" viewBox="0 0 8 8" className="ml-[4px]"><path d="M0 0h8M0 3h8L4 8z" stroke="#d6dbe1" fill="#d6dbe1" strokeWidth=".8" /></svg>
        <div className="ml-[6px]"><Ic n="share" s={17} /></div>
        <span className="ml-[2px] text-[#7fc4f0]">共享</span>
      </div>
      <span className="absolute left-[552px] whitespace-pre">Autodesk AutoCAD 2025</span>
      <span className="absolute left-[701px] whitespace-pre">长途客运站投标方案.dwg</span>
      <div className="absolute left-[1039px] top-[11px]"><svg width="4" height="8" viewBox="0 0 4 8"><path d="M0 0l4 4-4 4z" fill="#d6dbe1" /></svg></div>
      <div className="absolute left-[1050px] top-[5px] flex h-[19px] w-[166px] items-center bg-[#3b4453] pl-[3px] text-[11px] italic text-[#98a1ab]">键入关键字或短语</div>
      <div className="absolute left-[1220px] top-[6px]"><Ic n="search" s={16} /></div>
      <div className="absolute left-[1243px] top-[6px]"><Ic n="user" s={16} /></div>
      <span className="absolute left-[1263px] top-[8px]">登录</span>
      <div className="absolute left-[1342px] top-[12px]"><Caret w={6} /></div>
      <div className="absolute left-[1357px] top-[6px]"><Ic n="cart" s={16} /></div>
      <div className="absolute left-[1380px] top-[6px]"><Ic n="ann3" s={16} /></div>
      <div className="absolute left-[1399px] top-[12px]"><Caret w={6} /></div>
      <div className="absolute left-[1415px] top-[7px] h-[17px] w-px bg-[#4a5361]" />
      <div className="absolute left-[1423px] top-[6px]"><Ic n="help" s={16} /></div>
      <div className="absolute left-[1445px] top-[12px]"><Caret w={6} /></div>
      <div className="absolute left-[1486px] top-[14px] h-px w-[10px] bg-[#d6dbe1]" />
      <div className="absolute left-[1530px] top-[10px] h-[10px] w-[8px] rounded-[1px] border border-[#d6dbe1]" />
      <svg className="absolute left-[1571px] top-[9px]" width="10" height="11" viewBox="0 0 10 11"><path d="M0 0l10 11M10 0L0 11" stroke="#d6dbe1" /></svg>
    </div>
  );
}
function MenuBar() {
  return (
    <div className="relative flex h-[22px] items-center border-b-2 border-[#1c232c] bg-[#222a35] pl-[17px] pt-[2px] text-[12px] tracking-[-0.2px] text-[#b9c0c8] shrink-0">
      {menus.map(m => <span key={m[0]} className="whitespace-pre" style={{ width: m[1] }}>{m[0]}</span>)}
      <div className="absolute left-[1516px] top-[10px] h-px w-[10px] bg-[#c0c6cd]" />
      <div className="absolute left-[1546px] top-[6px] h-[10px] w-[8px] border border-[#c0c6cd]" />
      <svg className="absolute left-[1576px] top-[5px]" width="10" height="11" viewBox="0 0 10 11"><path d="M0 0l10 11M10 0L0 11" stroke="#c0c6cd" /></svg>
    </div>
  );
}
function Slash({ ml = 0 }: { ml?: number }) {
  return <svg width="7" height="18" viewBox="0 0 7 18" className="shrink-0" style={{ marginLeft: ml }}><path d="M6 0L1 18" stroke="#4a5361" /></svg>;
}
function TabBar() {
  return (
    <div className="flex h-[24px] items-end bg-[#222a35] text-[12px] text-[#e4e7ea] shrink-0">
      <div className="ml-[17px] self-center"><Ic n="ham" s={18} /></div>
      <div className="ml-[8px] self-center"><Slash /></div>
      <span className="ml-[8px] self-center">开始</span>
      <div className="ml-[9px] flex h-[22px] w-[149px] items-center bg-[#3b4453] pl-[12px] whitespace-nowrap [clip-path:polygon(8px_0,100%_0,calc(100%-8px)_100%,0_100%)]">
        <span className="text-[11.5px] font-medium">长途客运站投标方案*</span>
        <span className="ml-[5px] text-[#aab2bb] text-[14px] leading-none">×</span>
      </div>
      <div className="ml-[3px] self-center"><Ic n="plus" s={17} /></div>
      <div className="ml-[9px] self-center"><Slash /></div>
    </div>
  );
}
function Toolbars() {
  const r1a = ['new', 'open', 'save', '|', 'print', 'preview', 'plot', 'dwf', '|', 'cut', 'copy', 'paste', 'match', 'match2', '|', 'undo', '^', 'redo', '^', '|', 'hand', 'zoomrt', 'zoomw', 'zoomp', '|', 'prop', 'dc', 'tp', 'sheet', 'note', 'calc', '|', 'help'];
  const r2a = ['dl', 'da', 'dr', 'dord', '|', 'darc', 'drad', 'ddia', 'dang', '|', 'qd', 'db', 'dc2', 'ds', 'dbk', '|', 'tol', 'cen', 'ins', 'jog', '|', 'ded', 'dt2', 'du', '|'];
  const r2b = ['solid1', 'solid2', 'solid3', '|', 'ext', 'mv', 'cp', 'col', 'turn', 'slice', 'imp', 'red', '|', 'chop', 'chamf', 'clean', 'sep', '|', 'sadd', 'sbrush', 'sw', 'sbox', 'scheck'];
  return (
    <div className="flex h-[81px] flex-col bg-[#3b4453] pt-[4px] pl-[4px] text-[12px] text-[#1a1a1a] shrink-0">
      <div className="flex items-center">
        <Panel cls="w-[605px]"><Grip /><Tool items={r1a} /></Panel>
        <Panel cls="ml-[2px] w-[375px]">
          <Grip /><Tool items={['layer']} />
          <div className="ml-[0.5px] flex h-[21px] w-[281px] items-center bg-white pl-[3px] pr-[3px]">
            <svg width="84" height="18" viewBox="0 0 84 18" className="shrink-0">
              <path d="M5 2a3.500 3.500 0 0 1 3.500 3.500c0 2-1.500 3-1.500 5H3c0-2-1.500-3-1.500-5A3.500 3.500 0 0 1 5 2zM3 11.500h4v2H3z" fill="#f5a623" />
              <circle cx="21" cy="9" r="4" fill="#f5a623" /><path d="M21 1v3M21 14v3M13 9h3M26 9h3M15 3l2 2M25 13l2 2M15 15l2-2M25 5l2-2" stroke="#f5a623" />
              <path d="M33 3h9v11h-9z" fill="none" stroke="#777" strokeDasharray="2 1" /><circle cx="44" cy="13" r="2.500" fill="#f5a623" />
              <path d="M53 8h9v8h-9z" fill="#f5a623" /><path d="M56 8V4a3 3 0 0 1 6 0" fill="none" stroke="#f5a623" strokeWidth="1.500" />
              <rect x="69.500" y="3.500" width="10" height="12" fill="#fff" stroke="#888" />
            </svg>
            <span className="ml-[5px]">0</span>
            <div className="ml-auto mr-[1px]"><Chev /></div>
          </div>
          <Tool items={['l2', 'l3', 'l4']} />
        </Panel>
        <Grip />
        <Select w="w-[142px] ml-[1px]">
          <div className="ml-[4px] h-[15px] w-[12px] border border-[#888] bg-white" />
          <span className="ml-[3px]">ByLayer</span><div className="ml-auto mr-[5px]"><Chev /></div>
        </Select>
        <Select w="w-[151px] ml-[4px]">
          <div className="ml-[6px] h-px w-[56px] bg-black" /><span className="ml-[5px]">ByLayer</span><div className="ml-auto mr-[5px]"><Chev /></div>
        </Select>
        <Select w="w-[118px] ml-[4px]">
          <div className="ml-[6px] h-px w-[34px] bg-black" /><span className="ml-[4px]">ByLayer</span><div className="ml-auto mr-[4px]"><Chev /></div>
        </Select>
        <Select w="w-[114px] ml-[5px]" bg="bg-[#f2f2f2]">
          <span className="ml-[11px] text-[#8a8a8a]">ByColor</span><div className="ml-auto mr-[5px]"><Chev c="#aaa" /></div>
        </Select>
      </div>
      <div className="mt-[4px] flex items-center">
        <Panel cls="w-[601px]">
          <Grip /><Tool items={r2a} />
          <div className="ml-[1.500px] flex h-[21px] w-[112px] items-center justify-center bg-white relative pr-[16px]">
            <span>STANDARD</span><div className="absolute right-[4px]"><Chev /></div>
          </div>
          <Tool items={['ded']} />
        </Panel>
        <Panel cls="ml-[2px] w-[456px]"><Grip /><Tool items={r2b} /></Panel>
      </div>
      <div className="mt-[2px] flex items-center">
        <Panel cls="w-[73px]"><Grip /><Tool items={['t1', 't2', 't3']} /></Panel>
      </div>
    </div>
  );
}
function SideTools({ items, cls }: { items: string[]; cls: string }) {
  return (
    <div className={`flex flex-col items-center border border-[#2a323e] pb-[1px] ${cls}`}>
      <div className="mb-[3px] mt-[3px] h-[3px] w-[14px] border-y border-dotted border-[#8a93a0]" />
      {items.map(t => <div key={t} className="flex h-[20.6px] w-full items-center justify-center"><Ic n={t} s={19} /></div>)}
    </div>
  );
}
function LayoutTabs() {
  return (
    <div className="flex h-[31px] flex-col bg-[#222a35] text-[12px] text-[#e4e7ea] shrink-0">
      <div className="h-[4px] bg-[#3b4453]" />
      <div className="flex h-[22px] items-center">
        <div className="ml-[17px]"><Ic n="ham" s={18} /></div>
        <div className="ml-[8px] flex h-[22px] w-[54px] items-center justify-center bg-[#3b4453] [clip-path:polygon(8px_0,100%_0,calc(100%-8px)_100%,0_100%)]">模型</div>
        <span className="ml-[6px]">布局1</span>
        <div className="ml-[8px]"><Slash /></div>
        <div className="ml-[4px]"><Ic n="plus" s={16} /></div>
        <div className="ml-[10px]"><Slash /></div>
      </div>
    </div>
  );
}
function StatusBar() {
  return (
    <div className="flex h-[29px] items-start bg-[#222a35] pt-[1px] pl-[5px] text-[12px] text-[#e4e7ea] shrink-0">
      <div className="flex h-[22px] w-full items-center">
        <Sbox w={453} ml={0}><span /></Sbox>
        <Sbox w={131} ml={4}><span className="ml-auto mr-[5px] whitespace-pre [font-family:'Liberation_Sans',sans-serif] text-[11px]">178563, 75117, 0</span></Sbox>
        <Sbox w={28}><span className="w-full text-center">模型</span></Sbox>
        <Sbox w={59}><Sb w={23} n="grid" /><Sb w={21} n="snap" on /><Caret w={15} /></Sbox>
        <Sbox w={145} ml={4}><Sb w={24} n="infer" /><Sb w={22} n="dyn" on /><Sb w={22} n="ortho" /><Sb w={22} n="polar" /><Caret w={14} /><Sb w={22} n="iso" /><Caret w={14} /></Sbox>
        <Sbox w={165} ml={3}><Sb w={21} n="otr" /><Sb w={20} n="osnap" on /><Caret w={16} /><Sb w={25} n="lw" /><Sb w={20} n="tr" on /><Sb w={27} n="cyc" /><Sb w={20} n="d3" /><Caret w={16} /></Sbox>
        <Sbox w={97} ml={4}><Sb w={21} n="wst" on /><Sb w={23} n="sel" /><Caret w={15} /><Sb w={21} n="gizmo" on /><Caret w={16} /></Sbox>
        <Sbox w={136} ml={3}><Sb w={21} n="ann" on /><Sb w={23} n="ann2" /><Sb w={22} n="ann3" /><span className="w-[56px] text-center whitespace-pre [font-family:'Liberation_Sans',sans-serif]">1:1 / 100%</span><Caret w={13} /></Sbox>
        <Sbox w={36}><Sb w={22} n="gear" /><Caret w={14} /></Sbox>
        <Sbox w={22}><Sb w={22} n="plus" /></Sbox>
        <Sbox w={89}><Sb w={22} n="ruler" /><span className="ml-[5px]">小数</span><div className="ml-auto"><Caret w={12} /></div></Sbox>
        <Sbox w={20} ml={4}><Sb w={20} n="qp" /></Sbox>
        <Sbox w={37} ml={4}><Sb w={22} n="loc" /><Caret w={14} /></Sbox>
        <Sbox w={21} ml={4}><Sb w={21} n="nodes" /></Sbox>
        <Sb w={20} n="perf" on round />
        <Sbox w={25} ml={5}><Sb w={25} n="clean2" /></Sbox>
        <Sbox w={22} ml={5}><Sb w={22} n="fs" /></Sbox>
        <div className="ml-[4px]"><Sb w={22} n="ham" /></div>
      </div>
    </div>
  );
}

export default function App() {
  return (
    <div className="relative flex h-[1269px] w-[1600px] flex-col overflow-hidden bg-[#3b4453] [font-family:'Noto_Sans_CJK_SC',sans-serif] leading-none">
      <TitleBar />
      <MenuBar />
      <TabBar />
      <Toolbars />
      <div className="flex h-[1054px] shrink-0">
        <div className="w-[31px] shrink-0 pl-[4px]">
          <SideTools items={leftTools} cls="w-[23px]" />
        </div>
        <div className="relative h-[1054px] w-[1535px] shrink-0 overflow-hidden bg-black">
          <Drawing />
          <div className="absolute left-[411px] top-[974px] flex h-[14px] w-[33px] items-center rounded-[2px] bg-[#4a4a4a] pl-[2px] [font-family:'DejaVu_Sans_Mono','Noto_Sans_CJK_SC',monospace] text-[11px] text-[#d8d8d8]">命令:</div>
          <div className="absolute left-[411px] top-[993px] flex h-[14px] w-[88px] items-center rounded-[2px] bg-[#4a4a4a] pl-[2px] whitespace-pre [font-family:'DejaVu_Sans_Mono','Noto_Sans_CJK_SC',monospace] text-[11px] text-[#d8d8d8]">命令: _mtedit</div>
          <div className="absolute left-[411px] top-[1011px] flex h-[15px] w-[78px] items-center rounded-[2px] bg-[#4a4a4a] pl-[2px] whitespace-pre [font-family:'DejaVu_Sans_Mono','Noto_Sans_CJK_SC',monospace] text-[11px] text-[#d8d8d8]">命令: *取消*</div>
          <div className="absolute left-[352px] top-[1029px] flex h-[25px] w-[831px] items-stretch">
            <div className="flex w-[54px] items-center bg-[#2b3340]/90 rounded-l-[3px]">
              <div className="ml-[3px] h-[17px] w-[3px] border-x border-dotted border-[#aab2bb]" />
              <svg className="ml-[7px]" width="9" height="9" viewBox="0 0 9 9"><path d="M1 1l7 7M8 1L1 8" stroke="#c8ced5" strokeWidth="1.300" /></svg>
              <svg className="ml-[8px]" width="16" height="16" viewBox="0 0 16 16"><path d="M2 14l8-8M9 7a3 3 0 0 1 3-5l-2 2 2 2 2-2a3 3 0 0 1-5 3" stroke="#c8ced5" strokeWidth="1.800" fill="none" /></svg>
            </div>
            <div className="relative flex flex-1 items-center bg-[#b9b9b9]/90 text-[12px] italic text-[#6f6f6f]">
              <svg className="absolute left-[4px]" width="16" height="14" viewBox="0 0 16 14"><rect x=".5" y=".5" width="15" height="13" fill="none" stroke="#3b4453" /><path d="M.5 3h15M3 6l2 2-2 2M6 10h3" stroke="#3b4453" fill="none" /></svg>
              <svg className="absolute left-[22px]" width="6" height="4" viewBox="0 0 6 4"><path d="M0 0h6L3 4z" fill="#3b4453" /></svg>
              <span className="ml-[35px]">键入命令</span>
              <svg className="absolute right-[3px] top-[9px]" width="8" height="5" viewBox="0 0 8 5"><path d="M0 5h8L4 0z" fill="#444" /></svg>
            </div>
          </div>
        </div>
        <div className="w-[34px] shrink-0 pl-[3px]">
          <SideTools items={rightTools} cls="w-[24px]" />
        </div>
      </div>
      <LayoutTabs />
      <StatusBar />
      <Watermarks />
      <div className="pointer-events-none absolute left-[1406px] top-[1134px] flex text-[63px] font-normal leading-none tracking-[-1px] text-[#bcbcbc] [-webkit-text-stroke:1.5px_#bcbcbc]">知末</div>
      <div className="pointer-events-none absolute left-[1360px] top-[1212px] [font-family:'Roboto',sans-serif] text-[32px] font-medium leading-[36px] text-white">ID: 1180446342</div>
      <div className="pointer-events-none absolute inset-0 border-2 border-[#0a87c9]" />
    </div>
  );
}
